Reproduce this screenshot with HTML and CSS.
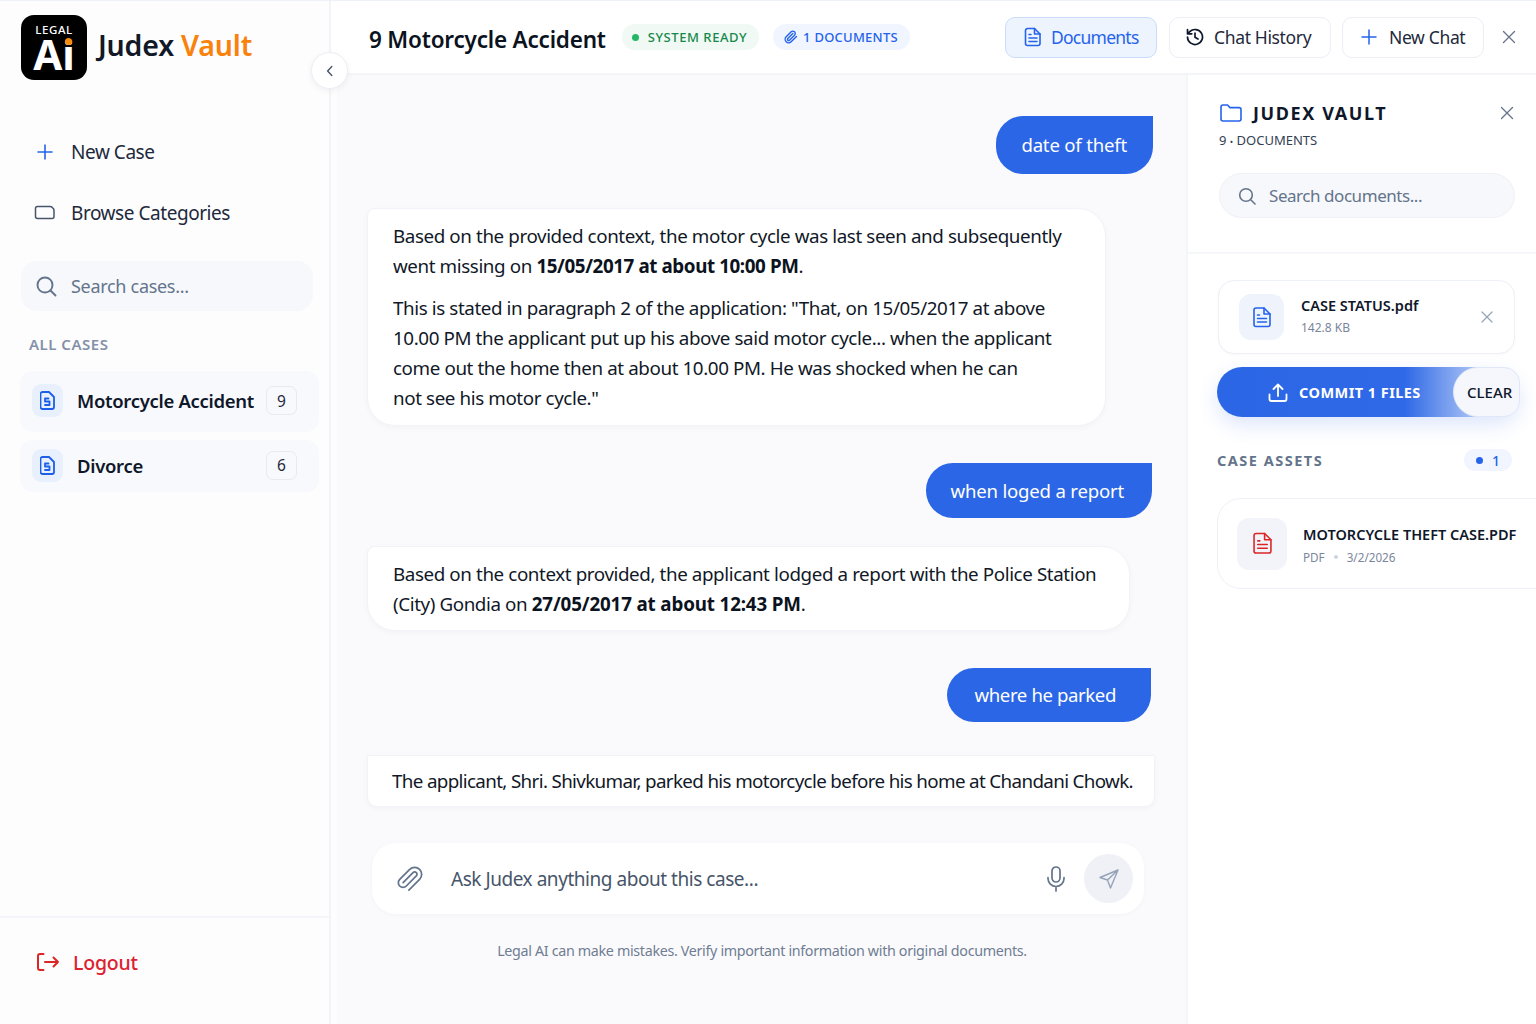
FILE: index.html
```html
<!DOCTYPE html>
<html lang="en">
<head>
<meta charset="utf-8">
<title>Judex Vault</title>
<link rel="stylesheet" href="styles.css">
</head>
<body>
<div class="app">
  <aside class="sidebar">
    <div class="brand">
      <div class="logo"><span class="logo-legal">LEGAL</span><span class="logo-ai">Ai</span><span class="logo-dot"></span></div>
      <div class="brand-name">Judex <span class="orange">Vault</span></div>
    </div>
    <button class="collapse"><svg width="12" height="12" viewBox="0 0 12 12" fill="none" stroke="#475569" stroke-width="1.4" stroke-linecap="round" stroke-linejoin="round"><path d="M7.8 1.600 3.600 6l4.200 4.400"/></svg></button>
    <nav class="nav">
      <div class="nav-item"><svg class="nav-ic" width="20" height="20" viewBox="0 0 20 20" fill="none" stroke="#2563eb" stroke-width="1.6" stroke-linecap="round"><path d="M10 3v14M3 10h14"/></svg>New Case</div>
      <div class="nav-item"><svg class="nav-ic" width="22" height="18" viewBox="0 0 22 18" fill="none" stroke="#475569" stroke-width="1.5" stroke-linejoin="round"><path d="M1.500 4.500q0-2 2-2h12.500q1.500 0 2.500 1.200l1 1.100q.5.7.5 1.700v6q0 2-2 2H3.500q-2 0-2-2z"/></svg>Browse Categories</div>
    </nav>
    <div class="side-search">
      <svg width="22" height="22" viewBox="0 0 22 22" fill="none" stroke="#64748b" stroke-width="1.9" stroke-linecap="round"><circle cx="10" cy="10" r="7.500"/><path d="m15.500 15.500 5 5"/></svg>
      <span>Search cases...</span>
    </div>
    <div class="side-label">ALL CASES</div>
    <div class="case-list">
      <div class="case case-a">
        <span class="case-ic"><svg width="15" height="19" viewBox="0 0 15 19" fill="none" stroke="#1d5fe8" stroke-width="1.800" stroke-linejoin="round" stroke-linecap="round"><path d="M2.500 1h6.500l5 5v10a2 2 0 0 1-2 2H2.500a2 2 0 0 1-2-2V3a2 2 0 0 1 2-2z"/><path d="M8.500 7.500h-3.500v3h4.500v3.500H5"/></svg></span>
        <span class="case-name">Motorcycle Accident</span><span class="case-count">9</span>
      </div>
      <div class="case case-b">
        <span class="case-ic"><svg width="15" height="19" viewBox="0 0 15 19" fill="none" stroke="#1d5fe8" stroke-width="1.800" stroke-linejoin="round" stroke-linecap="round"><path d="M2.500 1h6.500l5 5v10a2 2 0 0 1-2 2H2.500a2 2 0 0 1-2-2V3a2 2 0 0 1 2-2z"/><path d="M8.500 7.500h-3.500v3h4.500v3.500H5"/></svg></span>
        <span class="case-name">Divorce</span><span class="case-count">6</span>
      </div>
    </div>
    <div class="side-foot">
      <div class="logout"><svg width="24" height="20" viewBox="0 0 24 20" fill="none" stroke="#dc2626" stroke-width="2" stroke-linecap="round" stroke-linejoin="round"><path d="M7.500 2H4Q2 2 2 4v12q0 2 2 2h3.500"/><path d="M9 10h13M17.500 5.500 22 10l-4.500 4.500"/></svg>Logout</div>
    </div>
  </aside>

  <div class="workspace">
    <header class="topbar">
      <h1 class="title">9 Motorcycle Accident</h1>
      <span class="pill pill-green"><i class="dot"></i>SYSTEM READY</span>
      <span class="pill pill-blue"><svg width="14" height="14" viewBox="0 0 24 24" fill="none" stroke="#2563eb" stroke-width="2.400" stroke-linecap="round" stroke-linejoin="round"><path d="m21.440 11.050-9.190 9.190a6 6 0 0 1-8.490-8.490l8.570-8.570A4 4 0 1 1 18 8.840l-8.590 8.570a2 2 0 0 1-2.830-2.830l8.490-8.480"/></svg>1 DOCUMENTS</span>
      <div class="top-actions">
        <button class="tbtn tbtn-on"><svg width="18" height="20" viewBox="0 0 18 20" fill="none" stroke="#2563eb" stroke-width="1.600" stroke-linecap="round" stroke-linejoin="round"><path d="M3.500 1.500h7l5.500 5.500v9.500a2 2 0 0 1-2 2H3.500a2 2 0 0 1-2-2v-13a2 2 0 0 1 2-2z"/><path d="M10.500 1.500V7H16M5 7.500h2M5 11h8M5 14.500h8"/></svg>Documents</button>
        <button class="tbtn tbtn-hist"><svg width="18" height="18" viewBox="0 0 18 18" fill="none" stroke="#0f172a" stroke-width="1.700" stroke-linecap="round" stroke-linejoin="round"><path d="M1.500 9a7.500 7.500 0 1 0 2.300-5.400L1.500 5.800M1.500 1.500v4.300h4.300"/><path d="M9 5v4.300l3 1.700"/></svg>Chat History</button>
        <button class="tbtn tbtn-new"><svg width="16" height="16" viewBox="0 0 16 16" fill="none" stroke="#2563eb" stroke-width="1.500" stroke-linecap="round"><path d="M8 1v14M1 8h14"/></svg>New Chat</button>
        <button class="x-btn"><svg width="14" height="14" viewBox="0 0 14 14" fill="none" stroke="#64748b" stroke-width="1.300" stroke-linecap="round"><path d="m1.500 1.500 11 11M12.500 1.500l-11 11"/></svg></button>
      </div>
    </header>
    <div class="body">
      <main class="chat">
        <div class="msgs">
          <div class="bubble u1">date of theft</div>
          <div class="reply r1">
            <p>Based on the provided context, the motor cycle was last seen and subsequently<br>went missing on <b>15/05/2017 at about 10:00 PM</b>.</p>
            <p>This is stated in paragraph 2 of the application: "That, on 15/05/2017 at above<br>10.00 PM the applicant put up his above said motor cycle... when the applicant<br>come out the home then at about 10.00 PM. He was shocked when he can<br>not see his motor cycle."</p>
          </div>
          <div class="bubble u2">when loged a report</div>
          <div class="reply r2">
            <p>Based on the context provided, the applicant lodged a report with the Police Station<br>(City) Gondia on <b>27/05/2017 at about 12:43 PM</b>.</p>
          </div>
          <div class="bubble u3">where he parked</div>
          <div class="reply r3">
            <p>The applicant, Shri. Shivkumar, parked his motorcycle before his home at Chandani Chowk.</p>
          </div>
        </div>
        <div class="composer">
          <svg class="clip" width="28" height="28" viewBox="0 0 24 24" fill="none" stroke="#64748b" stroke-width="1.500" stroke-linecap="round" stroke-linejoin="round"><path d="m21.440 11.050-9.190 9.190a6 6 0 0 1-8.490-8.490l8.570-8.570A4 4 0 1 1 18 8.840l-8.590 8.570a2 2 0 0 1-2.830-2.830l8.490-8.480"/></svg>
          <span class="ask">Ask Judex anything about this case...</span>
          <svg class="mic" width="20" height="26" viewBox="0 0 20 26" fill="none" stroke="#64748b" stroke-width="1.700" stroke-linecap="round" stroke-linejoin="round"><rect x="6" y="1" width="8" height="15" rx="4"/><path d="M2 11.500v1a8 8 0 0 0 16 0v-1M10 20.500V25"/></svg>
          <span class="send"><svg width="20" height="20" viewBox="0 0 20 20" fill="none" stroke="#94a3b8" stroke-width="1.400" stroke-linejoin="round"><path d="M19 1 1 8.500l7.500 2.500L11.500 19zM19 1 8.500 11"/></svg></span>
        </div>
        <div class="note">Legal AI can make mistakes. Verify important information with original documents.</div>
      </main>
      <aside class="vault">
        <div class="vault-head">
          <div class="vault-title-row">
            <svg width="22" height="18" viewBox="0 0 22 18" fill="none" stroke="#2563eb" stroke-width="1.600" stroke-linejoin="round"><path d="M1 3a2 2 0 0 1 2-2h4.500l2.500 2.600h9a2 2 0 0 1 2 2V15a2 2 0 0 1-2 2H3a2 2 0 0 1-2-2z"/></svg>
            <span class="vault-title">JUDEX VAULT</span>
            <svg class="vault-x" width="14" height="14" viewBox="0 0 14 14" fill="none" stroke="#64748b" stroke-width="1.300" stroke-linecap="round"><path d="m1.500 1.500 11 11M12.500 1.500l-11 11"/></svg>
          </div>
          <div class="vault-sub">9 <em>•</em> DOCUMENTS</div>
          <div class="doc-search">
            <svg width="18" height="18" viewBox="0 0 18 18" fill="none" stroke="#64748b" stroke-width="1.600" stroke-linecap="round"><circle cx="8" cy="8" r="6.300"/><path d="m13 13 4 4"/></svg>
            <span>Search documents...</span>
          </div>
        </div>
        <div class="vault-body">
          <div class="pending">
            <span class="file-ic file-ic-blue"><svg width="18" height="21" viewBox="0 0 18 21" fill="none" stroke="#2563eb" stroke-width="1.600" stroke-linecap="round" stroke-linejoin="round"><path d="M3 1h8l6 6v10.500a2 2 0 0 1-2 2H3a2 2 0 0 1-2-2V3a2 2 0 0 1 2-2z"/><path d="M11 1v6h6M4.500 8h2M4.500 11.500h9M4.500 15h9"/></svg></span>
            <div class="file-text"><div class="file-name">CASE STATUS.pdf</div><div class="file-size">142.8 KB</div></div>
            <svg class="file-x" width="12" height="12" viewBox="0 0 12 12" fill="none" stroke="#94a3b8" stroke-width="1.200" stroke-linecap="round"><path d="m1 1 10 10M11 1 1 11"/></svg>
          </div>
          <div class="commit-row">
            <div class="commit"><svg width="20" height="19" viewBox="0 0 20 19" fill="none" stroke="#fff" stroke-width="1.800" stroke-linecap="round" stroke-linejoin="round"><path d="M1.500 11.500v4.500a2 2 0 0 0 2 2h13a2 2 0 0 0 2-2v-4.500M10 13V1.500M5.500 6 10 1.500 14.500 6"/></svg>COMMIT 1 FILES</div>
            <div class="clear">CLEAR</div>
          </div>
          <div class="assets-head"><span class="assets-label">CASE ASSETS</span><span class="assets-count"><i></i>1</span></div>
          <div class="asset">
            <span class="file-ic file-ic-red"><svg width="19" height="23" viewBox="0 0 18 21" fill="none" stroke="#dc2626" stroke-width="1.500" stroke-linecap="round" stroke-linejoin="round"><path d="M3 1h8l6 6v10.500a2 2 0 0 1-2 2H3a2 2 0 0 1-2-2V3a2 2 0 0 1 2-2z"/><path d="M11 1v6h6M4.500 8h2M4.500 11.500h9M4.500 15h9"/></svg></span>
            <div class="file-text asset-text"><div class="asset-name">MOTORCYCLE THEFT CASE.PDF</div><div class="asset-meta">PDF<i></i>3/2/2026</div></div>
          </div>
        </div>
      </aside>
    </div>
  </div>
</div>
</body>
</html>
```
FILE: styles.css
```css
* { box-sizing: border-box; }
html, body { margin: 0; height: 100%; }
body { font-family: "Noto Sans", "Open Sans", sans-serif; color: #0f172a; background: #fff; overflow: hidden; }
button { font: inherit; margin: 0; }
p { margin: 0; }
.app { display: flex; height: 1024px; width: 1536px; border-top: 1px solid #eef2f8; overflow: hidden; }

.sidebar { position: relative; width: 331px; flex: none; display: flex; flex-direction: column; background: #fdfdfe; border-right: 2px solid #f3f4f9; padding-left: 21px; }
.brand { display: flex; align-items: center; gap: 11px; padding-top: 14px; height: 79px; }
.logo { position: relative; width: 66px; height: 65px; background: #000; border-radius: 13px; color: #fff; display: flex; flex-direction: column; align-items: center; flex: none; }
.logo-legal { font-size: 11.500px; font-weight: 500; line-height: 11px; margin-top: 9px; letter-spacing: .6px; }
.logo-ai { font-size: 42px; font-weight: 700; line-height: 34px; margin-top: 2px; }
.logo-dot { position: absolute; right: 15px; top: 22.500px; width: 7px; height: 7px; border-radius: 50%; background: #f58a0b; }
.brand-name { font-size: 28.500px; font-weight: 600; color: #111827; letter-spacing: -.2px; margin-top: -5px; }
.orange { color: #f9820c; }
.collapse { position: absolute; left: 311px; top: 51px; width: 37px; height: 37px; border-radius: 50%; background: #fff; border: 1px solid #eceef5; box-shadow: 0 2px 6px rgba(30,41,59,.06); padding: 0; display: flex; align-items: center; justify-content: center; }
.nav { margin-top: 51px; display: flex; flex-direction: column; gap: 19px; }
.nav-item { display: flex; align-items: center; height: 42px; font-size: 19px; letter-spacing: -.45px; color: #1e293b; }
.nav-ic { width: 24px; margin: 0 14px 0 12px; flex: none; }
.side-search { margin-top: 27px; width: 292px; height: 50px; border-radius: 16px; background: #f7f8fc; display: flex; align-items: center; gap: 14px; padding-left: 14px; color: #64748b; font-size: 18px; letter-spacing: -.3px; }
.side-label { margin: 23px 0 0 8px; font-size: 15px; font-weight: 600; color: #8490a8; letter-spacing: .5px; line-height: 20px; }
.case-list { margin: 17px 0 0 -1px; display: flex; flex-direction: column; gap: 8px; width: 299px; }
.case { display: flex; align-items: center; background: #f8f9fd; border-radius: 13px; padding: 0 22px 2px 12px; }
.case-a { height: 61px; }
.case-b { height: 52px; }
.case-ic { width: 31px; height: 33px; border-radius: 9px; background: #e9f0fd; display: flex; align-items: center; justify-content: center; flex: none; margin-right: 14px; }
.case-name { flex: 1; font-size: 18.500px; font-weight: 600; color: #0f172a; letter-spacing: -.3px; white-space: nowrap; }
.case-count { width: 31px; height: 29px; border: 1px solid #e8eaf0; border-radius: 7px; display: flex; align-items: center; justify-content: center; font-size: 15.500px; color: #1e293b; flex: none; }
.side-foot { margin: auto 0 0 -21px; height: 108px; border-top: 2px solid #f4f5fa; display: flex; align-items: center; padding: 0 0 18px 36px; }
.logout { display: flex; align-items: center; gap: 13px; color: #dc2231; font-size: 19.500px; font-weight: 500; letter-spacing: -.2px; }

.workspace { flex: 1; min-width: 0; display: flex; flex-direction: column; }
.topbar { height: 74px; flex: none; display: flex; align-items: center; padding-left: 38px; background: #fff; border-bottom: 2px solid #f4f5f9; }
.title { margin: 7px 16px 0 0; font-size: 22.500px; font-weight: 600; color: #0b1220; white-space: nowrap; line-height: 1; letter-spacing: -.2px; }
.pill { display: inline-flex; align-items: center; height: 26px; border-radius: 13px; font-size: 13px; font-weight: 500; white-space: nowrap; }
.pill-green { background: #f0f9f4; color: #16894a; padding: 0 12px 0 10px; gap: 9px; margin-right: 14px; letter-spacing: .55px; }
.dot { width: 7px; height: 7px; border-radius: 50%; background: #22b866; }
.pill-blue { background: #f0f5ff; color: #2563eb; padding: 0 12px 0 11px; gap: 5px; letter-spacing: .25px; }
.top-actions { margin-left: auto; display: flex; align-items: center; gap: 12px; padding-right: 17px; }
.tbtn { height: 41px; display: flex; align-items: center; border-radius: 10px; background: #fff; border: 1.500px solid #eceef5; font-size: 17.500px; letter-spacing: -.35px; color: #1e293b; padding: 0; white-space: nowrap; }
.tbtn-on { width: 152px; background: #eef4fe; border-color: #c9dcfa; color: #2563eb; gap: 9px; padding-left: 18px; letter-spacing: -.75px; }
.tbtn-hist { width: 162px; gap: 10px; padding-left: 16px; }
.tbtn-new { width: 142px; gap: 12px; padding-left: 18px; margin-left: -1px; }
.x-btn { width: 20px; height: 20px; padding: 0; background: none; border: 0; display: flex; align-items: center; justify-content: center; margin-left: 3px; }

.body { flex: 1; display: flex; min-height: 0; }
.chat { width: 855px; flex: none; background: #fafafd; display: flex; flex-direction: column; padding: 41px 0 0 30px; border-left: 6px solid #fdfdfe; }
.msgs { width: 788px; display: flex; flex-direction: column; flex: none; }
.bubble { align-self: flex-end; background: #2b66e6; color: #fff; font-size: 18.600px; letter-spacing: -.2px; border-radius: 27px 0 27px 27px; display: flex; align-items: center; white-space: nowrap; }
.u1 { height: 58px; padding: 0 26px 2px 25px; margin-right: 2px; }
.u2 { height: 55px; padding: 0 28px 0 25px; margin: 37px 3px 0 0; }
.u3 { height: 54px; padding: 0 35px 2px 28px; margin: 37px 4px 0 0; letter-spacing: -.4px; }
.reply { background: #fff; border: 1px solid #f2f3f8; box-shadow: 0 2px 6px rgba(30,41,59,.03); font-size: 18.800px; letter-spacing: -.4px; line-height: 30px; color: #111827; white-space: nowrap; padding: 12px 25px 0; flex: none; }
.reply b { font-weight: 700; color: #0b1220; }
.reply p + p { margin-top: 12px; }
.r1 { width: 739px; height: 218px; margin-top: 34px; border-radius: 8px 28px 28px 28px; }
.r2 { width: 763px; height: 85px; margin-top: 28px; border-radius: 8px 28px 28px 28px; }
.r2 b { letter-spacing: -.15px; }
.r3 { width: 788px; height: 52px; margin-top: 33px; padding: 10px 0 0 24px; border-radius: 0 0 10px 10px; letter-spacing: -.65px; }
.composer { width: 772px; height: 71px; margin: 36px 0 0 5px; background: #fff; border-radius: 24px; display: flex; align-items: center; padding: 0 11px 0 24px; box-shadow: 0 1px 5px rgba(30,41,59,.03); flex: none; }
.clip { flex: none; transform: scaleX(-1) rotate(90deg); }
.ask { margin-left: 27px; flex: 1; font-size: 19px; letter-spacing: -.46px; color: #475569; }
.mic { flex: none; margin-right: 18px; }
.send { width: 49px; height: 49px; border-radius: 50%; background: #eff1f6; display: flex; align-items: center; justify-content: center; flex: none; }
.note { width: 790px; margin-top: 27px; text-align: center; font-size: 14.300px; letter-spacing: -.33px; line-height: 20px; color: #707d92; }

.vault { flex: 1; min-width: 0; background: #fff; border-left: 2px solid #f4f5f9; overflow: hidden; }
.vault-head { height: 179px; padding: 26px 0 0 32px; border-bottom: 2px solid #f6f7fb; }
.vault-title-row { display: flex; align-items: center; gap: 11px; position: relative; height: 24px; }
.vault-title { font-size: 18px; font-weight: 700; letter-spacing: 1.600px; color: #0f172a; }
.vault-x { position: absolute; left: 280px; top: 5px; }
.vault-sub { margin: 5px 0 0 -1px; font-size: 13px; line-height: 20px; color: #334155; }
.vault-sub em { font-style: normal; font-size: 9px; }
.doc-search { margin: 21px 0 0 -1px; width: 296px; height: 45px; border-radius: 23px; background: #f7f8fb; border: 1px solid #f0f1f7; display: flex; align-items: center; gap: 13px; padding-left: 18px; color: #64748b; font-size: 17px; letter-spacing: -.45px; }
.vault-body { padding: 26px 0 0 30px; width: 400px; }
.pending { width: 297px; height: 74px; border: 1px solid #eef0f7; border-radius: 16px; background: #fff; display: flex; align-items: center; padding-left: 20px; box-shadow: 0 1px 3px rgba(30,41,59,.03); }
.file-ic { border-radius: 12px; display: flex; align-items: center; justify-content: center; flex: none; }
.file-ic-blue { width: 45px; height: 46px; background: #eef3fc; margin-right: 17px; }
.file-ic-red { width: 50px; height: 52px; background: #f3f4f9; margin-right: 16px; }
.file-text { min-width: 0; }
.file-name { font-size: 14.500px; font-weight: 600; color: #0f172a; line-height: 20px; white-space: nowrap; margin-top: -3px; }
.file-size { font-size: 12px; line-height: 18px; color: #7b869c; margin-top: 4px; }
.file-x { margin-left: auto; margin-right: 21px; }
.commit-row { display: flex; width: 303px; height: 50px; margin: 13px 0 0 -1px; border-radius: 25px; box-shadow: 0 8px 20px rgba(43,102,230,.16); background: linear-gradient(90deg, #2b66e6 0%, #2f69e7 62%, #a9c2f3 85%); }
.commit { flex: 1; display: flex; align-items: center; gap: 11px; padding-left: 51px; color: #fff; font-size: 14.500px; font-weight: 700; letter-spacing: .45px; }
.clear { width: 67px; height: 50px; border-radius: 25px 16px 16px 25px; background: #f5f7fc; border: 1px solid #dfe7f8; display: flex; align-items: center; padding-left: 13px; font-size: 15px; font-weight: 500; color: #0f172a; }
.assets-head { display: flex; align-items: center; justify-content: space-between; width: 295px; height: 24px; margin: 31px 0 0 -1px; }
.assets-label { font-size: 14.500px; font-weight: 700; letter-spacing: 1.500px; color: #64748b; }
.assets-count { width: 48px; height: 22px; border-radius: 11px; background: #f0f5ff; color: #2563eb; font-size: 14px; font-weight: 500; display: flex; align-items: center; justify-content: center; gap: 9px; }
.assets-count i { width: 7px; height: 7px; border-radius: 50%; background: #2563eb; }
.asset { width: 380px; height: 91px; border: 1px solid #f0f1f7; border-radius: 24px; background: #fff; display: flex; align-items: center; padding-left: 19px; margin: 26px 0 0 -1px; }
.asset-text { padding-top: 2px; }
.asset-name { font-size: 14.500px; font-weight: 600; color: #0f172a; line-height: 20px; white-space: nowrap; }
.asset-meta { font-size: 11.700px; color: #7b869c; line-height: 18px; margin-top: 4px; display: flex; align-items: center; }
.asset-meta i { width: 4px; height: 4px; border-radius: 50%; background: #cbd5e1; margin: 0 9px; }
```
